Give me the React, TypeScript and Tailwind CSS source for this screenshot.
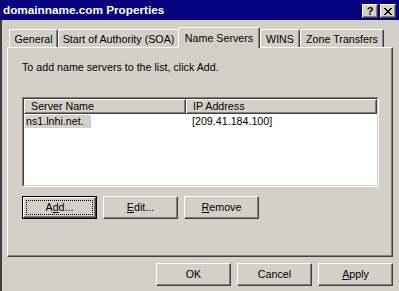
import React from "react";

function Btn({ children, def = false }: { children: React.ReactNode; def?: boolean }) {
  if (def) {
    return (
      <div className="h-[23px] w-[75px] border border-black">
        <div className="h-full w-full bg-[#d4d0c8] border-t border-l border-white border-r border-b border-r-[#404040] border-b-[#404040] shadow-[inset_-1px_-1px_0_#808080] flex items-center justify-center p-[2px]">
          <div className="h-full w-full border border-dotted border-black flex items-center justify-center leading-[13px]">
            {children}
          </div>
        </div>
      </div>
    );
  }
  return (
    <div className="h-[23px] w-[75px] bg-[#d4d0c8] border-t border-l border-white border-r border-b border-r-[#404040] border-b-[#404040] shadow-[inset_-1px_-1px_0_#808080] flex items-center justify-center leading-[13px]">
      {children}
    </div>
  );
}

function Tab({ label, w, noRight = false }: { label: string; w: string; noRight?: boolean }) {
  return (
    <div
      className={`${w} h-[18px] border-t border-l border-white rounded-tl-[2px] rounded-tr-[2px] flex items-center justify-center leading-[13px] pt-[1px] ${
        noRight ? "" : "border-r border-r-[#404040] shadow-[inset_-1px_0_0_#808080]"
      }`}
    >
      {label}
    </div>
  );
}

export default function App() {
  return (
    <div className="w-[399px] h-[291px] bg-[#d4d0c8] overflow-hidden flex flex-col text-[10.7px] text-black font-['Liberation_Sans',Arial,sans-serif]">
      {/* Title bar */}
      <div className="h-[20px] bg-[#06047e] flex items-start shrink-0">
        <div className="flex-1 h-full flex items-center pl-[3px] text-white font-bold text-[11.75px] leading-[14px]">
          domainname.com Properties
        </div>
        <div className="flex gap-[2px] mt-[4px] mr-[3px]">
          <div className="w-[16px] h-[14px] bg-[#d4d0c8] border-t border-l border-white border-r border-b border-r-[#404040] border-b-[#404040] shadow-[inset_-1px_-1px_0_#808080] flex items-center justify-center font-bold text-[11px] leading-[11px]">
            ?
          </div>
          <div className="w-[16px] h-[14px] bg-[#d4d0c8] border-t border-l border-white border-r border-b border-r-[#404040] border-b-[#404040] shadow-[inset_-1px_-1px_0_#808080] flex items-center justify-center">
            <svg width="8" height="7" viewBox="0 0 8 7" shapeRendering="crispEdges">
              <path d="M0 0h2v1h-2zM6 0h2v1h-2zM1 1h2v1h-2zM5 1h2v1h-2zM2 2h4v1h-4zM3 3h2v1h-2zM2 4h4v1h-4zM1 5h2v1h-2zM5 5h2v1h-2zM0 6h2v1h-2zM6 6h2v1h-2z" fill="#000" />
            </svg>
          </div>
        </div>
      </div>

      <div className="flex-1 flex">
        <div className="w-[2px] bg-[#404040] shrink-0" />
        <div className="flex-1 flex flex-col">
          {/* Tabs */}
          <div className="flex items-end h-[20px] mt-[7px] pl-[7px]">
            <Tab label="General" w="w-[49px]" />
            <Tab label="Start of Authority (SOA)" w="w-[120px]" noRight />
            <div className="relative z-10 w-[82px] h-[21px] mb-[-1px] bg-[#d4d0c8] border-t border-l border-white border-r border-r-[#404040] shadow-[inset_-1px_0_0_#808080] rounded-tl-[2px] rounded-tr-[2px] flex items-start justify-center pt-[4px] leading-[13px]">
              Name Servers
            </div>
            <Tab label="WINS" w="w-[40px]" />
            <Tab label="Zone Transfers" w="w-[84px]" />
          </div>

          {/* Panel */}
          <div className="ml-[5px] w-[386px] h-[210px] border-t border-l border-white border-r border-b border-r-[#404040] border-b-[#404040] shadow-[inset_-1px_-1px_0_#808080] pl-[14px] pt-[13px] flex flex-col">
            <div className="leading-[13px]">To add name servers to the list, click Add.</div>

            {/* List view */}
            <div className="mt-[23px] w-[357px] h-[90px] border-t border-l border-[#808080] border-r border-b border-r-white border-b-white">
              <div className="h-full w-full bg-white border-t border-l border-[#404040] border-r border-b border-r-[#d4d0c8] border-b-[#d4d0c8]">
                <div className="flex h-[15px]">
                  <div className="w-[162px] h-full bg-[#d4d0c8] border-t border-l border-white border-r border-b border-r-[#404040] border-b-[#404040] shadow-[inset_-1px_-1px_0_#808080] flex items-center pl-[6px] leading-[13px]">
                    Server Name
                  </div>
                  <div className="w-[191px] h-full bg-[#d4d0c8] border-t border-l border-white border-r border-b border-r-[#404040] border-b-[#404040] shadow-[inset_-1px_-1px_0_#808080] flex items-center pl-[6px] leading-[13px]">
                    IP Address
                  </div>
                </div>
                <div className="flex mt-[1px] h-[13px] leading-[13px]">
                  <div className="w-[162px] pl-[1px]">
                    <span className="inline-block w-[66px] h-[13px] bg-[#d4d0c8] pl-[1px]">ns1.lnhi.net.</span>
                  </div>
                  <div className="pl-[6px]">[209.41.184.100]</div>
                </div>
              </div>
            </div>

            {/* Buttons */}
            <div className="flex gap-[6px] mt-[9px]">
              <Btn def>
                <span>
                  A<span className="underline">d</span>d...
                </span>
              </Btn>
              <Btn>
                <span>
                  <span className="underline">E</span>dit...
                </span>
              </Btn>
              <Btn>
                <span>
                  <span className="underline">R</span>emove
                </span>
              </Btn>
            </div>
          </div>

          {/* Bottom buttons */}
          <div className="flex justify-end gap-[6px] mt-[6px] pr-[6px]">
            <Btn>OK</Btn>
            <Btn>Cancel</Btn>
            <Btn>
              <span>
                <span className="underline">A</span>pply
              </span>
            </Btn>
          </div>
        </div>
      </div>
    </div>
  );
}
